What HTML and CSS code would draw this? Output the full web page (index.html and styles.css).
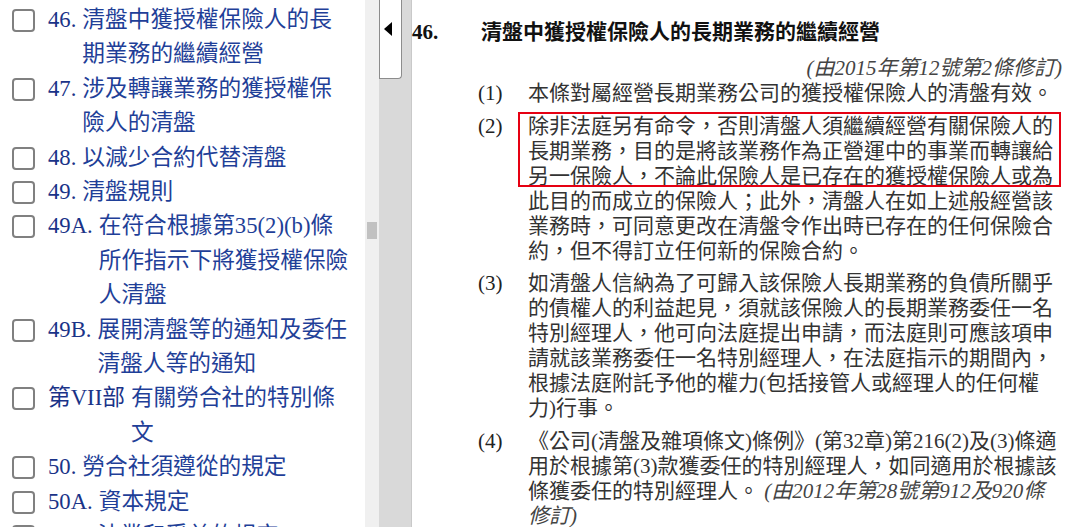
FILE: index.html
```html
<!DOCTYPE html>
<html lang="zh-Hant">
<head>
    <meta charset="UTF-8">
    <meta name="viewport" content="width=device-width, initial-scale=1.0">
    <title>第41章 保險業條例</title>
    <link rel="stylesheet" href="styles.css">
</head>
<body>
    <div class="page">
        <div class="toc">
            <div class="toc-item"><span class="box"></span><span class="num">46.</span><span class="title">清盤中獲授權保險人的長期業務的繼續經營</span></div>
            <div class="toc-item"><span class="box"></span><span class="num">47.</span><span class="title">涉及轉讓業務的獲授權保險人的清盤</span></div>
            <div class="toc-item"><span class="box"></span><span class="num">48.</span><span class="title">以減少合約代替清盤</span></div>
            <div class="toc-item"><span class="box"></span><span class="num">49.</span><span class="title">清盤規則</span></div>
            <div class="toc-item"><span class="box"></span><span class="num">49A.</span><span class="title">在符合根據第35(2)(b)條所作指示下將獲授權保險人清盤</span></div>
            <div class="toc-item"><span class="box"></span><span class="num">49B.</span><span class="title">展開清盤等的通知及委任清盤人等的通知</span></div>
            <div class="toc-item"><span class="box"></span><span class="num">第VII部</span><span class="title">有關勞合社的特別條文</span></div>
            <div class="toc-item"><span class="box"></span><span class="num">50.</span><span class="title">勞合社須遵從的規定</span></div>
            <div class="toc-item"><span class="box"></span><span class="num">50A.</span><span class="title">資本規定</span></div>
            <div class="toc-item"><span class="box"></span><span class="num">50B.</span><span class="title">法業和受益的規定</span></div>
        </div>
        <div class="scrollbar"><div class="thumb"></div></div>
        <div class="splitter">
            <div class="collapse">
                <svg width="9" height="14" viewBox="0 0 9 14"><polygon points="8,0 8,14 0,7" fill="#000"/></svg>
            </div>
        </div>
        <div class="content">
            <div class="section-head">
                <span class="sec-num">46.</span>
                <span class="sec-title">清盤中獲授權保險人的長期業務的繼續經營</span>
            </div>
            <div class="amend">(由2015年第12號第2條修訂)</div>
            <div class="sub first">
                <span class="sub-num">(1)</span>
                <p class="sub-text">本條對屬經營長期業務公司的獲授權保險人的清盤有效。</p>
            </div>
            <div class="sub">
                <span class="sub-num">(2)</span>
                <p class="sub-text">除非法庭另有命令，否則清盤人須繼續經營有關保險人的長期業務，目的是將該業務作為正營運中的事業而轉讓給另一保險人，不論此保險人是已存在的獲授權保險人或為此目的而成立的保險人；此外，清盤人在如上述般經營該業務時，可同意更改在清盤令作出時已存在的任何保險合約，但不得訂立任何新的保險合約。</p>
            </div>
            <div class="sub">
                <span class="sub-num">(3)</span>
                <p class="sub-text">如清盤人信納為了可歸入該保險人長期業務的負債所關乎的債權人的利益起見，須就該保險人的長期業務委任一名特別經理人，他可向法庭提出申請，而法庭則可應該項申請就該業務委任一名特別經理人，在法庭指示的期間內，根據法庭附託予他的權力(包括接管人或經理人的任何權力)行事。</p>
            </div>
            <div class="sub">
                <span class="sub-num">(4)</span>
                <p class="sub-text">《公司(清盤及雜項條文)條例》(第32章)第216(2)及(3)條適用於根據第(3)款獲委任的特別經理人，如同適用於根據該條獲委任的特別經理人。 <em>(由2012年第28號第912及920條修訂)</em></p>
            </div>
            <div class="highlight"></div>
        </div>
    </div>
</body>
</html>
```

FILE: styles.css
```css
body { margin: 0; background: #fff; font-family: "Liberation Serif", "Noto Sans CJK TC", serif; overflow: hidden; }
.page { display: flex; height: 527px; overflow: hidden; }

/* table of contents */
.toc { width: 365px; flex-shrink: 0; box-sizing: border-box; padding: 3px 13px 0 12px; font-size: 22.7px; line-height: 34.4px; color: #1f3f98; }
.toc-item { display: flex; align-items: flex-start; }
.box { width: 23px; height: 23px; box-sizing: border-box; border: 2px solid #808080; border-radius: 4px; margin: 6px 13px 0 0; flex-shrink: 0; background: #fff; }
.num { white-space: nowrap; margin-right: 6px; color: #1a3388; }
.title { flex: 1; }

.scrollbar { width: 14px; flex-shrink: 0; background: #f0f0f0; }
.thumb { width: 10px; height: 17px; margin: 222px 0 0 2px; background: #c1c1c1; }

.splitter { width: 32px; flex-shrink: 0; background: #d9d9d9; border-right: 1px solid #c9c9c9; }
.collapse { width: 23px; height: 79px; box-sizing: border-box; background: #fff; border: 1px solid #8c8c8c; border-top: none; border-radius: 0 0 4px 0; display: flex; justify-content: center; padding: 22px 4px 0 0; }

/* ordinance text */
.content { flex: 1; position: relative; padding: 20px 25px 0 0; font-size: 21px; line-height: 25px; color: #333; }
.section-head { display: flex; color: #111; font-weight: bold; margin-bottom: 11px; }
.sec-num { width: 69px; flex-shrink: 0; }
.amend { text-align: right; font-style: italic; color: #444; }
.sub { display: flex; padding-left: 66px; margin-top: 7.5px; }
.sub.first { margin-top: 0; }
.sub-num { width: 50px; flex-shrink: 0; color: #222; }
.sub-text { margin: 0; width: 534px; }
.sub-text em { color: #444; }
.highlight { position: absolute; left: 106px; top: 112px; width: 543px; height: 75px; box-sizing: border-box; border: 2px solid #e60012; }
```
